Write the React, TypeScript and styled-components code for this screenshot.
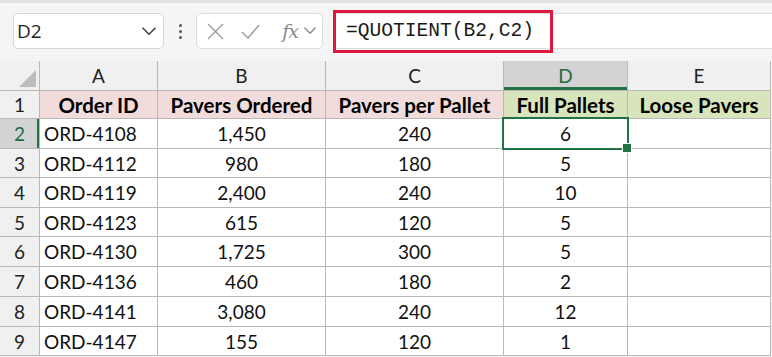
import React from "react";
import styled, { createGlobalStyle } from "styled-components";

const Global = createGlobalStyle`
  html, body { margin: 0; padding: 0; background: #ffffff; }
  body { font-family: "Lato", "Liberation Sans", sans-serif; }
  * { box-sizing: border-box; }
`;

const Page = styled.div`
  width: 772px;
  height: 357px;
  overflow: hidden;
  background: #f5f5f5;
  display: flex;
  flex-direction: column;
`;

const Toolbar = styled.div`
  height: 61px;
  flex: none;
  border-top: 3px solid #e3e3e3;
  padding: 10px 0 0 13px;
  display: flex;
  align-items: flex-start;
`;

const NameBox = styled.div`
  width: 151px;
  height: 36px;
  background: #ffffff;
  border: 1px solid #d6d6d6;
  border-radius: 5px;
  display: flex;
  align-items: center;
  justify-content: space-between;
  padding: 0 7px 0 3px;
  font-family: "Open Sans", "Noto Sans", sans-serif;
  font-size: 19px;
  color: #1f1f1f;
`;

const Dots = styled.div`
  width: 32px;
  height: 36px;
  display: flex;
  flex-direction: column;
  align-items: center;
  justify-content: center;
  gap: 3px;
`;

const Dot = styled.span`
  width: 3px;
  height: 3px;
  border-radius: 50%;
  background: #555;
`;

const FxBox = styled.div`
  width: 127px;
  height: 36px;
  background: #ffffff;
  border: 1px solid #dcdcdc;
  border-radius: 5px;
  display: flex;
  align-items: center;
  padding: 0 4px 0 9px;
`;

const IconSlot = styled.span<{ $w: number }>`
  width: ${(p) => p.$w}px;
  display: flex;
  align-items: center;
  justify-content: center;
`;

const FxText = styled.span`
  font-family: "DejaVu Serif", "Liberation Serif", serif;
  font-style: italic;
  font-size: 19px;
  color: #8a8a8a;
  letter-spacing: -1px;
  width: 24px;
  text-align: center;
`;

const FormulaField = styled.div`
  position: relative;
  flex: 1;
  margin-left: 10px;
  height: 36px;
  background: #ffffff;
  border-top: 1px solid #dcdcdc;
  border-bottom: 1px solid #dcdcdc;
  display: flex;
  align-items: center;
  padding-left: 13px;
  font-family: "Liberation Mono", "DejaVu Sans Mono", monospace;
  font-size: 19.6px;
  color: #1a1a1a;
`;

const Highlight = styled.div`
  position: absolute;
  left: 0;
  top: -4px;
  width: 220px;
  height: 43px;
  border: 3px solid #e0173f;
  pointer-events: none;
`;

const Grid = styled.div`
  display: grid;
  grid-template-columns: 39px 117px 167px 177px 123px 142px;
  grid-template-rows: 29px 27px 29px 28px 29px 28px 29px 29px 29px 28px;
  gap: 1px;
  background: #b8b8b8;
  width: 771px;
  padding: 0 1px 1px 0;
  font-size: 19px;
  color: #111;
`;

const Corner = styled.div`
  background: #f0f0f0;
  position: relative;
  &::after {
    content: "";
    position: absolute;
    right: 3px;
    bottom: 3px;
    width: 0;
    height: 0;
    border-left: 17px solid transparent;
    border-bottom: 17px solid #bdbdbd;
  }
`;

const ColHead = styled.div<{ $sel?: boolean }>`
  background: ${(p) => (p.$sel ? "#d3d3d3" : "#f0f0f0")};
  color: ${(p) => (p.$sel ? "#1e6b45" : "#222")};
  display: flex;
  align-items: center;
  justify-content: center;
  font-size: 19px;
  border-bottom: ${(p) => (p.$sel ? "3px solid #217346" : "none")};
  padding-top: ${(p) => (p.$sel ? "3px" : "0")};
`;

const RowHead = styled.div<{ $sel?: boolean }>`
  background: ${(p) => (p.$sel ? "#d3d3d3" : "#f0f0f0")};
  color: ${(p) => (p.$sel ? "#1e6b45" : "#222")};
  display: flex;
  align-items: center;
  justify-content: center;
  font-size: 19px;
  border-right: ${(p) => (p.$sel ? "2px solid #217346" : "none")};
  padding-left: ${(p) => (p.$sel ? "2px" : "0")};
`;

const HeadCell = styled.div<{ $tone: "pink" | "green" }>`
  background: ${(p) => (p.$tone === "pink" ? "#f2dcdb" : "#d8e4bc")};
  font-weight: 700;
  font-size: 20.5px;
  color: #000;
  display: flex;
  align-items: center;
  justify-content: center;
  white-space: nowrap;
`;

const Cell = styled.div<{ $align?: "left" | "center" }>`
  background: #ffffff;
  display: flex;
  align-items: center;
  justify-content: ${(p) => (p.$align === "left" ? "flex-start" : "center")};
  padding-left: ${(p) => (p.$align === "left" ? "4px" : "0")};
  position: relative;
  white-space: nowrap;
`;

const Selection = styled.div`
  position: absolute;
  z-index: 2;
  left: -2px;
  top: -2px;
  right: -2px;
  bottom: -2px;
  border: 2px solid #217346;
  pointer-events: none;
  &::after {
    content: "";
    position: absolute;
    right: -5px;
    bottom: -5px;
    width: 8px;
    height: 8px;
    background: #217346;
    border: 1px solid #ffffff;
  }
`;

const rows = [
  ["ORD-4108", "1,450", "240", "6"],
  ["ORD-4112", "980", "180", "5"],
  ["ORD-4119", "2,400", "240", "10"],
  ["ORD-4123", "615", "120", "5"],
  ["ORD-4130", "1,725", "300", "5"],
  ["ORD-4136", "460", "180", "2"],
  ["ORD-4141", "3,080", "240", "12"],
  ["ORD-4147", "155", "120", "1"],
];

const Chevron = ({ color, size }: { color: string; size: number }) => (
  <svg width={size} height={size * 0.6} viewBox="0 0 14 8" fill="none">
    <path d="M1 1l6 6 6-6" stroke={color} strokeWidth="1.6" strokeLinecap="round" strokeLinejoin="round" />
  </svg>
);

export default function App() {
  return (
    <>
      <Global />
      <Page>
        <Toolbar>
          <NameBox>
            <span>D2</span>
            <Chevron color="#444" size={14} />
          </NameBox>
          <Dots>
            <Dot />
            <Dot />
            <Dot />
          </Dots>
          <FxBox>
            <IconSlot $w={18}>
              <svg width="17" height="17" viewBox="0 0 17 17" fill="none">
                <path d="M1 1l15 15M16 1L1 16" stroke="#9a9a9a" strokeWidth="1.4" />
              </svg>
            </IconSlot>
            <IconSlot $w={16} />
            <IconSlot $w={20}>
              <svg width="19" height="15" viewBox="0 0 19 15" fill="none">
                <path d="M1 8l6 6L18 1" stroke="#9a9a9a" strokeWidth="1.4" />
              </svg>
            </IconSlot>
            <IconSlot $w={18} />
            <FxText>fx</FxText>
            <IconSlot $w={16}>
              <Chevron color="#8a8a8a" size={12} />
            </IconSlot>
          </FxBox>
          <FormulaField>
            =QUOTIENT(B2,C2)
            <Highlight />
          </FormulaField>
        </Toolbar>
        <Grid>
          <Corner />
          <ColHead>A</ColHead>
          <ColHead>B</ColHead>
          <ColHead>C</ColHead>
          <ColHead $sel>D</ColHead>
          <ColHead>E</ColHead>

          <RowHead>1</RowHead>
          <HeadCell $tone="pink">Order ID</HeadCell>
          <HeadCell $tone="pink">Pavers Ordered</HeadCell>
          <HeadCell $tone="pink">Pavers per Pallet</HeadCell>
          <HeadCell $tone="green">Full Pallets</HeadCell>
          <HeadCell $tone="green">Loose Pavers</HeadCell>

          {rows.map((r, i) => (
            <React.Fragment key={r[0]}>
              <RowHead $sel={i === 0}>{i + 2}</RowHead>
              <Cell $align="left">{r[0]}</Cell>
              <Cell>{r[1]}</Cell>
              <Cell>{r[2]}</Cell>
              <Cell>
                {r[3]}
                {i === 0 && <Selection />}
              </Cell>
              <Cell />
            </React.Fragment>
          ))}
        </Grid>
      </Page>
    </>
  );
}
